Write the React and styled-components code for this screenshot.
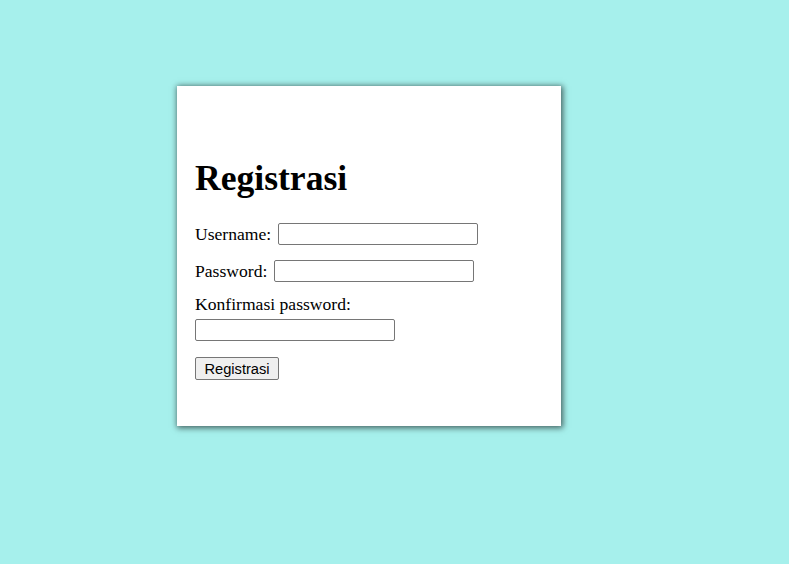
import React from 'react';
import styled, { createGlobalStyle } from 'styled-components';

const Global = createGlobalStyle`
    html, body {
        margin: 0;
        padding: 0;
        background: #a6f0ec;
        font-family: "Liberation Serif", "Times New Roman", serif;
    }
`;

const Page = styled.div`
    min-height: 564px;
    padding: 86px 0 0 177px;
    box-sizing: border-box;
`;

const Card = styled.div`
    width: 384px;
    height: 340px;
    box-sizing: border-box;
    background: #fff;
    padding: 72px 18px 0;
    box-shadow: 1px 1px 6px 1px rgba(0, 0, 0, 0.6);
    display: flex;
    flex-direction: column;
`;

const Title = styled.h1`
    margin: 0 0 25px;
    font-size: 35.6px;
    line-height: 40px;
    font-weight: bold;
    color: #000;
`;

const Row = styled.div`
    display: flex;
    align-items: center;
    gap: 7px;
    height: 22px;
    margin-top: ${props => props.top || 0}px;
`;

const Stack = styled.div`
    display: flex;
    flex-direction: column;
    gap: 5px;
    margin-top: 12px;
`;

const Label = styled.label`
    font-size: 17.6px;
    line-height: 20px;
    color: #000;
    white-space: nowrap;
`;

const Field = styled.input`
    width: 200px;
    height: 22px;
    box-sizing: border-box;
    margin: 0;
    padding: 1px 2px;
    border: 1px solid #767676;
    border-radius: 2px;
    background: #fff;
    font-family: "Liberation Sans", Arial, sans-serif;
    font-size: 14.67px;
`;

const Button = styled.button`
    align-self: flex-start;
    margin-top: 16px;
    width: 84px;
    height: 23px;
    box-sizing: border-box;
    padding: 0 6px;
    border: 1px solid #767676;
    border-radius: 2px;
    background: #efefef;
    color: #000;
    font-family: "Liberation Sans", Arial, sans-serif;
    font-size: 14.67px;
`;

function App() {
    return (
        <>
            <Global />
            <Page>
                <Card>
                    <Title>Registrasi</Title>
                    <Row>
                        <Label>Username:</Label>
                        <Field type="text" />
                    </Row>
                    <Row top={15}>
                        <Label>Password:</Label>
                        <Field type="password" />
                    </Row>
                    <Stack>
                        <Label>Konfirmasi password:</Label>
                        <Field type="password" />
                    </Stack>
                    <Button type="button">Registrasi</Button>
                </Card>
            </Page>
        </>
    );
}

export default App;
